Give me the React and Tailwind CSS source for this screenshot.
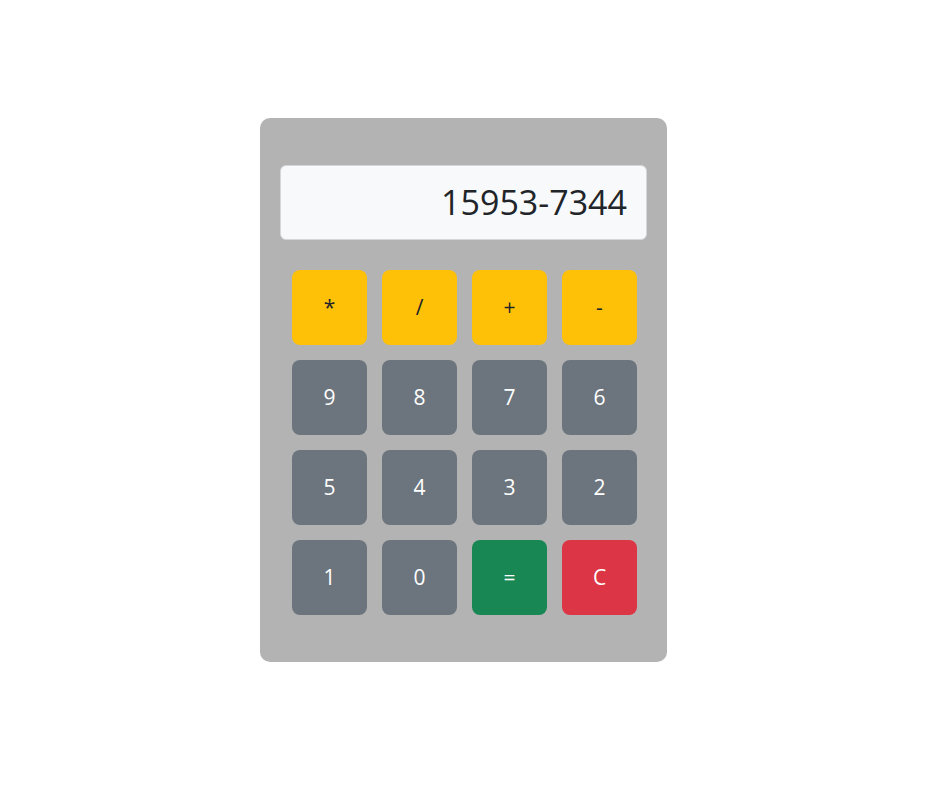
export default function App() {
  const rows = [
    [
      { l: "*", c: "bg-[#ffc107] text-[#212529]" },
      { l: "/", c: "bg-[#ffc107] text-[#212529]" },
      { l: "+", c: "bg-[#ffc107] text-[#212529]" },
      { l: "-", c: "bg-[#ffc107] text-[#212529]" },
    ],
    [
      { l: "9", c: "bg-[#6c757d] text-white" },
      { l: "8", c: "bg-[#6c757d] text-white" },
      { l: "7", c: "bg-[#6c757d] text-white" },
      { l: "6", c: "bg-[#6c757d] text-white" },
    ],
    [
      { l: "5", c: "bg-[#6c757d] text-white" },
      { l: "4", c: "bg-[#6c757d] text-white" },
      { l: "3", c: "bg-[#6c757d] text-white" },
      { l: "2", c: "bg-[#6c757d] text-white" },
    ],
    [
      { l: "1", c: "bg-[#6c757d] text-white" },
      { l: "0", c: "bg-[#6c757d] text-white" },
      { l: "=", c: "bg-[#198754] text-white" },
      { l: "C", c: "bg-[#dc3545] text-white" },
    ],
  ];
  return (
    <div
      className="min-h-[786px] bg-white pt-[118px] pl-[260px]"
      style={{ fontFamily: '"Open Sans", "Noto Sans", sans-serif' }}
    >
      <div className="w-[407px] h-[544px] bg-[#b3b3b3] rounded-[10px] pt-[47px] px-[20px]">
        <div className="h-[75px] bg-[#f8f9fa] border border-[#d4d6d8] rounded-[6px] flex items-center justify-end pr-[19px] text-[34px] text-[#212529]">
          15953-7344
        </div>
        <div className="mt-[30px] pl-[12px] grid grid-cols-[repeat(4,75px)] gap-[15px]">
          {rows.flat().map((b, i) => (
            <button
              key={i}
              className={`w-[75px] h-[75px] rounded-[8px] flex items-center justify-center text-[21px] ${b.c}`}
            >
              {b.l}
            </button>
          ))}
        </div>
      </div>
    </div>
  );
}
